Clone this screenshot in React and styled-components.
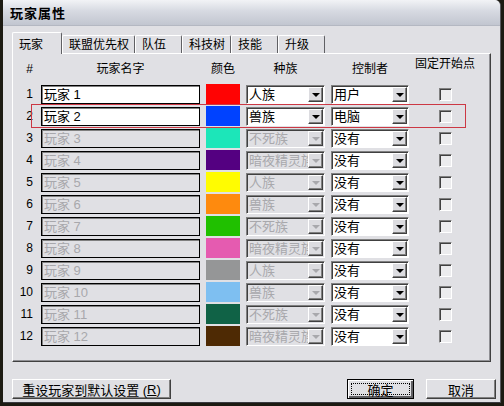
import React from 'react'
import styled, { createGlobalStyle, css } from 'styled-components'

const GlobalStyle = createGlobalStyle`
    html, body {
        margin: 0;
        padding: 0;
        width: 504px;
        height: 406px;
        overflow: hidden;
        background: #1c1a12;
    }

    body {
        font-family: "Liberation Sans", "Noto Sans CJK SC", sans-serif;
        font-size: 12px;
        color: #000;
    }
`

const raised = css`
    border: 1px solid;
    border-color: #ffffff #404040 #404040 #ffffff;
    box-shadow: inset -1px -1px 0 #808080;
`

const sunken = css`
    border: 1px solid;
    border-color: #808080 #ffffff #ffffff #808080;
    box-shadow: inset 1px 1px 0 #404040;
`

const StyledWindow = styled.div`
    display: flex;
    flex-direction: column;
    margin-left: 3px;
    width: 498px;
    height: 403px;
    box-sizing: border-box;
    background: #e0e0e4;
    border-right: 1px solid #5a5a60;
    border-bottom: 1px solid #3a3a40;
    border-top-right-radius: 6px;
    overflow: hidden;
`

const StyledTitleBar = styled.div`
    display: flex;
    align-items: center;
    height: 26px;
    flex-shrink: 0;
    padding-left: 7px;
    background: linear-gradient(180deg, #f2f3f6 0%, #d6d9e1 45%, #c2c6d0 100%);
    border-bottom: 1px solid #b4b8c2;
    box-sizing: border-box;
    font-size: 13px;
    font-weight: bold;
    letter-spacing: 1px;
`

const StyledBody = styled.div`
    display: flex;
    flex-direction: column;
    padding: 0 9px;
`

const StyledTabs = styled.div`
    display: flex;
    align-items: flex-end;
    height: 21px;
    margin-top: 6px;
    position: relative;
    z-index: 1;
`

const StyledTab = styled.div`
    display: flex;
    align-items: center;
    box-sizing: border-box;
    min-width: 47px;
    padding: 0 5px 0 6px;
    white-space: nowrap;
    border-top: 1px solid #ffffff;
    border-left: 1px solid #ffffff;
    border-right: 1px solid #606064;
    border-top-left-radius: 2px;
    border-top-right-radius: 2px;
    background: #e0e0e4;

    ${props => props.$active ? css`
        height: 22px;
        margin-bottom: -1px;
        min-width: 50px;
    ` : css`
        height: 18px;
        padding-bottom: 2px;
    `}
`

const StyledPanel = styled.div`
    height: 309px;
    box-sizing: border-box;
    border: 1px solid;
    border-color: #ffffff #404040 #404040 #ffffff;
    box-shadow: inset -1px -1px 0 #909094;
    padding: 0 0 0 1px;
`

const columns = '21px 159px 34px 79px 78px 60px'

const StyledHeader = styled.div`
    display: grid;
    grid-template-columns: ${columns};
    column-gap: 6px;
    align-items: end;
    height: 29px;
`

const StyledHeadCell = styled.div`
    text-align: ${props => props.$align || 'center'};
    padding-bottom: ${props => props.$raise ? 11 : 6}px;
    padding-right: ${props => props.$align === 'right' ? 2 : 0}px;
    line-height: 15px;
    white-space: nowrap;
`

const StyledRow = styled.div`
    position: relative;
    display: grid;
    grid-template-columns: ${columns};
    column-gap: 6px;
    align-items: center;
    height: 22px;
`

const StyledHighlight = styled.div`
    position: absolute;
    left: 17px;
    top: -1px;
    width: 433px;
    height: 22px;
    border: 1px solid #cc3844;
    pointer-events: none;
`

const StyledNumber = styled.div`
    text-align: right;
    padding-right: 2px;
`

const StyledName = styled.div`
    height: 19px;
    box-sizing: border-box;
    border: 1px solid #000;
    box-shadow: inset 1px 1px 0 #808080;
    padding-left: 2px;
    line-height: 17px;
    font-size: 13px;
    background: ${props => props.$disabled ? '#e0e0e4' : '#ffffff'};
    color: ${props => props.$disabled ? '#a8a8ac' : '#000'};
    white-space: pre;
`

const StyledSwatch = styled.div`
    height: 20px;
    background: ${props => props.$color};
`

const StyledSelect = styled.div`
    display: flex;
    align-items: center;
    height: 19px;
    box-sizing: border-box;
    ${sunken};
    background: ${props => props.$disabled ? '#e0e0e4' : '#ffffff'};
    color: ${props => props.$disabled ? '#a8a8ac' : '#000'};
`

const StyledSelectText = styled.div`
    flex: 1;
    overflow: hidden;
    white-space: nowrap;
    padding-left: 2px;
    font-size: 13px;
    line-height: 17px;
`

const StyledArrow = styled.div`
    display: flex;
    align-items: center;
    justify-content: center;
    width: 15px;
    height: 15px;
    margin-right: 1px;
    box-sizing: border-box;
    flex-shrink: 0;
    ${raised};
    background: #dcdce0;

    &::after {
        content: '';
        border-left: 4px solid transparent;
        border-right: 4px solid transparent;
        border-top: 4px solid ${props => props.$disabled ? '#a8a8ac' : '#000'};
        margin-top: 1px;
    }
`

const StyledCheckCell = styled.div`
    display: flex;
    justify-content: center;
    padding-left: 1px;
`

const StyledCheckbox = styled.div`
    width: 13px;
    height: 13px;
    box-sizing: border-box;
    ${sunken};
    background: #ececee;
`

const StyledFooter = styled.div`
    display: flex;
    align-items: center;
    justify-content: space-between;
    margin: 17px -5px 0 0;
`

const StyledButton = styled.div`
    display: flex;
    align-items: center;
    justify-content: center;
    box-sizing: border-box;
    height: 20px;
    width: ${props => props.$width}px;
    ${raised};
    background: #e0e0e4;
    font-size: 13px;
    white-space: nowrap;

    ${props => props.$default && css`
        border: 1px solid #000;
        box-shadow: inset 1px 1px 0 #ffffff, inset -2px -2px 0 #606064;
        outline: 1px dotted #000;
        outline-offset: -5px;
    `}
`

const StyledButtonGroup = styled.div`
    display: flex;
    gap: 12px;
`

const colors = [
    '#ff0303', '#0042ff', '#1ce6b9', '#540081', '#fffc01', '#fe8a0e',
    '#20c000', '#e55bb0', '#959697', '#7ebff1', '#106246', '#4e2a04',
]

const races = ['人族', '兽族', '不死族', '暗夜精灵族']

const controllers = ['用户', '电脑']

const tabs = ['玩家', '联盟优先权', '队伍', '科技树', '技能', '升级']

const Select = ({ value, disabled }) => (
    <StyledSelect $disabled={disabled}>
        <StyledSelectText>{value}</StyledSelectText>
        <StyledArrow $disabled={disabled} />
    </StyledSelect>
)

const PlayerRow = ({ index }) => {
    const active = index < 2
    return (
        <StyledRow>
            {index === 1 && <StyledHighlight />}
            <StyledNumber>{index + 1}</StyledNumber>
            <StyledName $disabled={!active}>{`玩家 ${index + 1}`}</StyledName>
            <StyledSwatch $color={colors[index]} />
            <Select value={races[index % 4]} disabled={!active} />
            <Select value={controllers[index] || '没有'} />
            <StyledCheckCell>
                <StyledCheckbox />
            </StyledCheckCell>
        </StyledRow>
    )
}

const App = () => (
    <>
        <GlobalStyle />
        <StyledWindow>
            <StyledTitleBar>玩家属性</StyledTitleBar>
            <StyledBody>
                <StyledTabs>
                    {tabs.map((tab, index) => (
                        <StyledTab key={tab} $active={index === 0}>{tab}</StyledTab>
                    ))}
                </StyledTabs>
                <StyledPanel>
                    <StyledHeader>
                        <StyledHeadCell $align="right">#</StyledHeadCell>
                        <StyledHeadCell>玩家名字</StyledHeadCell>
                        <StyledHeadCell>颜色</StyledHeadCell>
                        <StyledHeadCell>种族</StyledHeadCell>
                        <StyledHeadCell>控制者</StyledHeadCell>
                        <StyledHeadCell $raise>固定开始点</StyledHeadCell>
                    </StyledHeader>
                    {colors.map((color, index) => (
                        <PlayerRow key={color} index={index} />
                    ))}
                </StyledPanel>
                <StyledFooter>
                    <StyledButton $width={159}>重设玩家到默认设置 (<u>R</u>)</StyledButton>
                    <StyledButtonGroup>
                        <StyledButton $width={67} $default>确定</StyledButton>
                        <StyledButton $width={70}>取消</StyledButton>
                    </StyledButtonGroup>
                </StyledFooter>
            </StyledBody>
        </StyledWindow>
    </>
)

export default App
